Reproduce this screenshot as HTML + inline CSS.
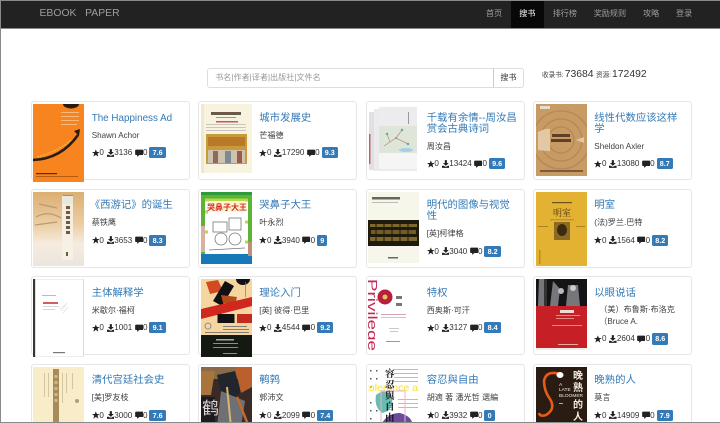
<!DOCTYPE html>
<html lang="zh"><head><meta charset="utf-8"><title>EBOOK PAPER</title>
<style>
*{box-sizing:border-box;margin:0;padding:0}
html,body{width:720px;height:423px;overflow:hidden;background:#fff}
body{font-family:"Liberation Sans","Noto Sans CJK SC",sans-serif;color:#333;position:relative}
#w{position:absolute;inset:0;overflow:hidden;filter:blur(.35px)}
#nav{position:absolute;left:0;top:0;width:720px;height:29px;background:#222;border-bottom:1px solid #8a8a8a}
#nav span{position:absolute;top:0;height:28px;line-height:27.6px;font-size:8.1px;color:#9d9d9d;white-space:nowrap}
#brand{left:39.5px;font-size:10.4px!important;line-height:27px!important;white-space:pre!important}
#act{left:510.7px;width:33.3px;background:#080808;color:#fff!important;text-align:center}
#inp{position:absolute;left:206.7px;top:68.3px;width:287.3px;height:19.6px;border:1px solid #ddd;border-radius:3px 0 0 3px;font-size:8.1px;line-height:17.6px;padding-left:7.5px;color:#999}
#btn{position:absolute;left:493.3px;top:68.3px;width:30.4px;height:19.6px;border:1px solid #ddd;border-left:1px solid #ccc;border-radius:0 3px 3px 0;font-size:8.1px;line-height:17.6px;text-align:center;color:#333}
.st{position:absolute;top:68px;font-size:6.6px;line-height:15px;white-space:nowrap;color:#444}
.st.n{font-size:10.4px;color:#333;top:67px}
.c{position:absolute;width:159px;height:79px;border:1px solid #e6e6e6;border-radius:3px;background:#fff}
.c>svg{position:absolute;left:1.7px;top:2px;display:block}
.t{position:absolute;left:60px;top:10.7px;width:92px}
.t a{display:block;font-size:10.4px;line-height:11px;color:#337ab7}
.t p{font-size:8.1px;line-height:11.7px;margin-top:6.3px;color:#3f3f3f}
.s{display:flex;align-items:center;height:12px;margin-top:5px;font-size:8.1px;color:#333;white-space:nowrap}
.s svg{width:7.7px;height:8px;flex:none}
.s svg.d{margin-left:2.7px}
.s svg.m{margin-left:2.4px;width:8.3px}
.s i{font-style:normal;display:inline-block;margin-left:2px;height:11.3px;line-height:11.3px;padding:0 3.2px;min-width:10px;text-align:center;background:#337ab7;color:#fff;font-weight:700;font-size:7.2px;border-radius:1.6px}
#f{position:absolute;inset:0;border-top:1px solid #8a8a8a;border-left:1px solid #8a8a8a;border-bottom:1px solid #8a8a8a;pointer-events:none}
</style></head><body>
<svg width="0" height="0" style="position:absolute"><defs>
<symbol id="a" viewBox="0 0 8 8"><path fill="#222" d="M4 .2 5.1 2.9H8L5.7 4.7 6.6 7.8 4 6 1.4 7.8 2.3 4.7 0 2.9H2.9z"/></symbol>
<symbol id="b" viewBox="0 0 8 8"><path fill="#222" d="M2.9 0H5.1V3H7L4 6 1 3H2.9zM0 5.8H1.7L4 7 6.3 5.8H8V8H0z"/></symbol>
<symbol id="e" viewBox="0 0 8 8"><path fill="#222" d="M.9.6H7.2Q8 .6 8 1.4V5.2Q8 6 7.2 6H4.2L2 7.9V6H.9Q0 6 0 5.2V1.4Q0 .6.9.6z"/></symbol>
</defs></svg>
<div id="w">
<div id="nav">
<span id="brand">EBOOK   PAPER</span>
<span style="left:486px">首页</span><span id="act">搜书</span><span style="left:552.7px">排行榜</span><span style="left:593.7px">奖励规则</span><span style="left:643px">攻略</span><span style="left:676px">登录</span>
</div>
<div id="inp">书名|作者|译者|出版社|文件名</div><div id="btn">搜书</div>
<span class="st" style="left:542px">收录书:</span><span class="st n" style="left:564.7px">73684</span><span class="st" style="left:596px">资源:</span><span class="st n" style="left:612px">172492</span>

<div class="c" style="left:30.7px;top:101px"><svg width="51" height="78" viewBox="0 0 51 78"><rect width="51" height="78" fill="#f7841f"/><ellipse cx="38" cy="0" rx="8" ry="4.5" fill="#2a1a10"/><path d="M0 56Q28 55 45 31" fill="none" stroke="#2b1c12" stroke-width="2.6"/><path d="M41 27 47 25 46 32z" fill="#2b1c12"/><path d="M4 53Q24 48 38 36" fill="none" stroke="#f4c14a" stroke-width="1" stroke-dasharray="2 1"/><g fill="#fbc896"><rect x="28" y="8" width="18" height=".8"/><rect x="28" y="12" width="18" height=".8"/><rect x="28" y="16" width="18" height=".8"/><rect x="28" y="20" width="16" height=".8"/></g><rect x="3" y="69" width="21" height="1.2" fill="#5a2c08"/><rect x="3" y="72" width="42" height=".8" fill="#a5520f"/></svg>
<div class="t"><a style="font-size:9.85px">The Happiness Ad</a><p>Shawn Achor</p><div class="s"><svg><use href="#a"/></svg>0<svg class="d"><use href="#b"/></svg>3136<svg class="m"><use href="#e"/></svg>0<i>7.6</i></div></div></div>

<div class="c" style="left:198.3px;top:101px"><svg width="51" height="69" viewBox="0 0 51 69"><rect width="51" height="69" fill="#f8f3df"/><rect x="10" y="8" width="30" height="3" fill="#6a5a48"/><rect x="15" y="13" width="20" height="1" fill="#998"/><rect x="15" y="17" width="22" height="1.5" fill="#c55"/><g fill="#bbb"><rect x="5" y="20" width="40" height=".8"/><rect x="5" y="23" width="40" height=".8"/><rect x="5" y="26" width="40" height=".8"/></g><rect x="5" y="30" width="41" height="30" fill="#c99a3c"/><rect x="7" y="33" width="37" height="9" fill="#b87a28"/><rect x="7" y="46" width="37" height="13" fill="#cfc3ad"/><rect x="12" y="47" width="5" height="12" fill="#8d6b5b"/><rect x="24" y="47" width="6" height="12" fill="#7d8a94"/><rect x="36" y="47" width="5" height="12" fill="#9a5a4c"/><rect y="0" width="3" height="69" fill="#eee8d2"/></svg>
<div class="t"><a>城市发展史</a><p>芒福德</p><div class="s"><svg><use href="#a"/></svg>0<svg class="d"><use href="#b"/></svg>17290<svg class="m"><use href="#e"/></svg>0<i>9.3</i></div></div></div>

<div class="c" style="left:365.7px;top:101px"><svg width="51" height="72" viewBox="0 0 51 72"><rect width="51" height="72" fill="#fff"/><rect x="1" y="8" width="10" height="58" fill="#e0e0e2"/><rect x="6" y="5" width="43" height="62" fill="#ebebee"/><rect x="11" y="3" width="38" height="62" fill="#ececef"/><rect x="11" y="22" width="38" height="27" fill="#dde6d9"/><path d="M16 42 28 34 40 40M28 34 34 26M22 38 19 30" stroke="#b88e72" stroke-width=".7" fill="none"/><g fill="#6ba39d"><circle cx="19" cy="30" r="1.2"/><circle cx="34" cy="26" r="1.2"/><circle cx="40" cy="40" r="1.2"/><circle cx="28" cy="34" r="1"/></g><ellipse cx="38" cy="46" rx="7" ry="2" fill="#a5d0e3"/><rect x="11" y="49" width="38" height="16" fill="#f5f5f5"/><rect x="40" y="8" width="1" height="12" fill="#999"/><rect x="1" y="30" width="1.5" height="30" fill="#b66"/></svg>
<div class="t"><a>千载有余情--周汝昌<br>赏会古典诗词</a><p>周汝昌</p><div class="s"><svg><use href="#a"/></svg>0<svg class="d"><use href="#b"/></svg>13424<svg class="m"><use href="#e"/></svg>0<i>9.6</i></div></div></div>

<div class="c" style="left:533.3px;top:101px"><svg width="51" height="72" viewBox="0 0 51 72"><rect width="51" height="72" fill="#c89a64"/><g fill="none" stroke="#b68758" stroke-width="1.3"><circle cx="25" cy="36" r="13"/><circle cx="25" cy="36" r="21"/><circle cx="25" cy="36" r="29"/></g><path d="M2 28Q10 24 14 25L14 47Q8 47 2 46z" fill="#e3c8a4"/><path d="M40 36 48 33 48 39z" fill="#e3c8a4"/><rect x="16" y="30" width="18" height="3" fill="#5d4026"/><rect x="15" y="35" width="20" height="3" fill="#5d4026"/><rect x="4" y="66" width="43" height="2" fill="#7b5a36"/><rect x="4" y="2" width="10" height="3" fill="#e6ddd0"/></svg>
<div class="t"><a>线性代数应该这样<br>学</a><p>Sheldon Axler</p><div class="s"><svg><use href="#a"/></svg>0<svg class="d"><use href="#b"/></svg>13080<svg class="m"><use href="#e"/></svg>0<i>8.7</i></div></div></div>

<div class="c" style="left:30.7px;top:188.5px"><svg width="51" height="74" viewBox="0 0 51 74"><defs><linearGradient id="g1" x1="0" y1="0" x2="0" y2="1"><stop offset="0" stop-color="#dcae72"/><stop offset=".45" stop-color="#eccfa5"/><stop offset=".7" stop-color="#f6ecdf"/><stop offset="1" stop-color="#ebe5de"/></linearGradient></defs><rect width="51" height="74" fill="url(#g1)"/><path d="M3 25Q15 18 28 26M6 12 24 16M2 33 24 30" stroke="#b99a72" stroke-width="1.2" fill="none"/><rect x="30" y="3" width="10" height="9" fill="#5ea6a5"/><rect x="29" y="4" width="11" height="64" fill="#f6f1e6" opacity=".9"/><g fill="#6a5a4a"><rect x="33" y="14" width="4" height="3"/><rect x="33" y="19" width="4" height="3"/><rect x="33" y="24" width="4" height="3"/><rect x="33" y="29" width="4" height="3"/><rect x="33" y="34" width="4" height="3"/><rect x="33" y="39" width="4" height="3"/><rect x="33" y="60" width="2" height="4"/></g></svg>
<div class="t"><a style="margin-left:-2px">《西游记》的诞生</a><p>蔡铁鹰</p><div class="s"><svg><use href="#a"/></svg>0<svg class="d"><use href="#b"/></svg>3653<svg class="m"><use href="#e"/></svg>0<i>8.3</i></div></div></div>

<div class="c" style="left:198.3px;top:188.5px"><svg width="51" height="72" viewBox="0 0 51 72"><rect width="51" height="72" fill="#5cb335"/><rect x="4" y="8" width="43" height="56" fill="#fff"/><path d="M4 8h43M4 20h3M44 30h3M4 40h3M44 50h3" stroke="#b6d84c" stroke-width="3" fill="none"/><rect x="8" y="9" width="36" height="11" fill="#fdf6c9"/><text x="26" y="18" text-anchor="middle" font-size="8" font-weight="700" fill="#d42a2a" font-family="Noto Sans CJK SC,sans-serif">哭鼻子大王</text><g fill="none" stroke="#777" stroke-width=".8"><rect x="12" y="30" width="14" height="10"/><rect x="28" y="26" width="12" height="12"/><circle cx="20" cy="47" r="6"/><circle cx="34" cy="47" r="6"/><path d="M8 58 44 56"/></g><rect y="62" width="51" height="10" fill="#1779b8"/><rect y="0" width="51" height="3" fill="#2d9b3a"/><rect x="0" y="34" width="4" height="26" fill="#d8b1a3"/><rect x="47" y="50" width="4" height="14" fill="#c08d7a"/></svg>
<div class="t"><a>哭鼻子大王</a><p>叶永烈</p><div class="s"><svg><use href="#a"/></svg>0<svg class="d"><use href="#b"/></svg>3940<svg class="m"><use href="#e"/></svg>0<i>9</i></div></div></div>

<div class="c" style="left:365.7px;top:188.5px"><svg width="51" height="71" viewBox="0 0 51 71"><rect width="51" height="71" fill="#f7f6ea"/><rect x="4" y="5" width="28" height="2.5" fill="#6a6658"/><rect x="4" y="10" width="26" height="1" fill="#bbb"/><rect y="28" width="51" height="26" fill="#1f1a0e"/><g fill="#a78c35"><rect x="2" y="32" width="47" height="3" opacity=".7"/><rect x="3" y="38" width="45" height="4" opacity=".6"/><rect x="2" y="45" width="47" height="4" opacity=".7"/></g><g stroke="#1f1a0e" stroke-width="1"><path d="M8 30V52M16 30V52M24 30V52M32 30V52M40 30V52"/></g><rect x="20" y="65" width="10" height="1.5" fill="#666"/></svg>
<div class="t"><a>明代的图像与视觉<br>性</a><p>[英]柯律格</p><div class="s"><svg><use href="#a"/></svg>0<svg class="d"><use href="#b"/></svg>3040<svg class="m"><use href="#e"/></svg>0<i>8.2</i></div></div></div>

<div class="c" style="left:533.3px;top:188.5px"><svg width="51" height="74" viewBox="0 0 51 74"><rect width="51" height="74" fill="#e4b233"/><rect x="16" y="10" width="20" height="1.2" fill="#6b5216"/><text x="26" y="24" text-anchor="middle" font-size="9" fill="#4a3610" font-family="Noto Serif CJK SC,serif">明室</text><rect x="14" y="27" width="24" height="1.5" fill="#c09628"/><rect x="18" y="30" width="16" height="18" fill="#8c6a22"/><ellipse cx="26" cy="38" rx="5" ry="6" fill="#3b2a10"/><rect x="40" y="34" width="9" height="1" fill="#a8851f"/><rect x="2" y="34" width="10" height="1" fill="#a8851f"/><rect x="3" y="58" width="1.5" height="14" fill="#b98e22"/></svg>
<div class="t"><a>明室</a><p>(法)罗兰.巴特</p><div class="s"><svg><use href="#a"/></svg>0<svg class="d"><use href="#b"/></svg>1564<svg class="m"><use href="#e"/></svg>0<i>8.2</i></div></div></div>

<div class="c" style="left:30.7px;top:276px"><svg width="51" height="78" viewBox="0 0 51 78"><rect width="51" height="78" fill="#fff"/><rect width="2.5" height="78" fill="#3a3530"/><rect x="2.5" y="0" width="48" height="78" fill="none" stroke="#ddd"/><rect x="9" y="16" width="14" height="1" fill="#bbb"/><rect x="10" y="23" width="15" height="2" fill="#d06060"/><rect x="10" y="27" width="16" height=".8" fill="#ccc"/><rect x="10" y="30" width="12" height=".8" fill="#ccc"/><path d="M28 32 34 24M30 34 35 28M26 30 32 26" stroke="#ddd" stroke-width=".7" fill="none"/><rect x="20" y="73" width="12" height="1.2" fill="#777"/></svg>
<div class="t"><a>主体解释学</a><p>米歇尔·福柯</p><div class="s"><svg><use href="#a"/></svg>0<svg class="d"><use href="#b"/></svg>1001<svg class="m"><use href="#e"/></svg>0<i>9.1</i></div></div></div>

<div class="c" style="left:198.3px;top:276px"><svg width="51" height="78" viewBox="0 0 51 78"><rect width="51" height="56" fill="#f5d6a0"/><rect y="56" width="51" height="22" fill="#141912"/><path d="M5 3 17 1 22 12 9 15z" fill="#d24a21"/><path d="M12 22 24 2 33 7 21 27z" fill="#111"/><path d="M20 16 36 18 34 26 22 24z" fill="#b54a1c"/><path d="M0 30 51 18 51 27 0 40z" fill="#d0271f"/><ellipse cx="42" cy="0" rx="7" ry="6" fill="#111"/><rect x="16.5" y="35" width="17" height="9" fill="#111"/><rect x="36" y="35" width="15" height="9" fill="#c42a20"/><rect x="44" y="3" width=".7" height="15" fill="#a07050"/><circle cx="7" cy="47" r="3" fill="none" stroke="#778" stroke-width=".8"/><g fill="#666"><rect x="22" y="47" width="24" height=".8"/><rect x="22" y="50" width="26" height=".8"/><rect x="4" y="53" width="44" height=".8"/></g><g fill="#aaa"><rect x="15" y="60" width="18" height="1.5"/><rect x="12" y="64" width="25" height=".8"/><rect x="12" y="68" width="25" height=".8"/><rect x="22" y="74" width="14" height=".8"/></g></svg>
<div class="t"><a>理论入门</a><p>[英] 彼得·巴里</p><div class="s"><svg><use href="#a"/></svg>0<svg class="d"><use href="#b"/></svg>4544<svg class="m"><use href="#e"/></svg>0<i>9.2</i></div></div></div>

<div class="c" style="left:365.7px;top:276px"><svg width="51" height="73" viewBox="0 0 51 73"><rect width="51" height="73" fill="#fff"/><text transform="translate(0,0) rotate(90)" font-size="13" fill="#c42a55" font-family="Liberation Sans,sans-serif" textLength="72" lengthAdjust="spacingAndGlyphs">Privilege</text><circle cx="17" cy="18" r="7.5" fill="#b81f3b"/><circle cx="17" cy="18" r="2.5" fill="#e8c06a"/><rect x="28" y="17" width="6" height="3" fill="#777"/><rect x="28" y="24" width="6" height="3" fill="#777"/><g fill="#d8a5b0"><rect x="13" y="35" width="25" height="1"/></g><g fill="#bbb"><rect x="13" y="38" width="25" height=".8"/><rect x="21" y="49" width="10" height=".8"/><rect x="22" y="52" width="8" height=".8"/></g><rect x="18" y="62" width="14" height="1" fill="#999"/></svg>
<div class="t"><a>特权</a><p>西奥斯·可汗</p><div class="s"><svg><use href="#a"/></svg>0<svg class="d"><use href="#b"/></svg>3127<svg class="m"><use href="#e"/></svg>0<i>8.4</i></div></div></div>

<div class="c" style="left:533.3px;top:276px"><svg width="51" height="71" viewBox="0 0 51 71"><rect width="51" height="71" fill="#c71f26"/><rect width="51" height="27" fill="#141416"/><path d="M3 0H9L8 27H2zM17 2 24 10 22 27H14zM32 6H42L44 27H30z" fill="#77777b"/><circle cx="25" cy="12" r="3" fill="#bbb"/><circle cx="37" cy="9" r="3" fill="#ccc"/><rect x="8" y="0" width="3" height="27" fill="#333"/><rect x="24" y="31" width="14" height="3" fill="#f0d9d0"/><g fill="#e9a8a0"><rect x="20" y="36" width="24" height=".8"/><rect x="20" y="39" width="18" height=".8"/><rect x="16" y="46" width="30" height=".8"/><rect x="22" y="65" width="20" height="1"/></g><rect y="69" width="51" height="2" fill="#f4ece8"/></svg>
<div class="t"><a>以眼说话</a><p style="padding-left:5px;margin-top:5.8px">（美）布鲁斯·布洛克<br>（Bruce A.</p><div class="s"><svg><use href="#a"/></svg>0<svg class="d"><use href="#b"/></svg>2604<svg class="m"><use href="#e"/></svg>0<i>8.6</i></div></div></div>

<div class="c" style="left:30.7px;top:363.5px"><svg width="51" height="60" viewBox="0 0 51 60"><rect width="51" height="60" fill="#f9ecc8"/><rect x="20" y="2" width="6" height="58" fill="#a98b5a"/><g fill="#c9b98e"><rect x="21.5" y="8" width="3" height="3"/><rect x="21.5" y="14" width="3" height="3"/><rect x="21.5" y="20" width="3" height="3"/><rect x="21.5" y="26" width="3" height="3"/><rect x="21.5" y="32" width="3" height="3"/></g><g fill="#cdbd95"><rect x="11" y="6" width=".8" height="24"/><rect x="15" y="6" width=".8" height="24"/><rect x="29" y="6" width=".8" height="30"/><rect x="33" y="6" width=".8" height="20"/><rect x="39" y="6" width=".8" height="16"/></g><circle cx="44" cy="34" r="2" fill="#b0a070"/></svg>
<div class="t"><a>清代宫廷社会史</a><p>[美]罗友枝</p><div class="s"><svg><use href="#a"/></svg>0<svg class="d"><use href="#b"/></svg>3000<svg class="m"><use href="#e"/></svg>0<i>7.6</i></div></div></div>

<div class="c" style="left:198.3px;top:363.5px"><svg width="51" height="60" viewBox="0 0 51 60"><rect width="51" height="60" fill="#3a2a25"/><rect width="51" height="12" fill="#8a6a48"/><path d="M0 4H14L10 28H0z" fill="#a8753c"/><path d="M16 8 34 4 40 26 22 36z" fill="#23252c"/><path d="M34 0H51V20L40 26z" fill="#b9602c"/><path d="M20 24 44 34 40 60H16z" fill="#6e7076"/><path d="M26 20 30 60" stroke="#d8b66a" stroke-width="2"/><path d="M36 30 48 60" stroke="#c26a2d" stroke-width="2.5"/><path d="M0 30H14V60H0z" fill="#1d1a22"/><text x="1" y="47" font-size="17" fill="#e0d7cf" font-family="Noto Sans CJK SC,sans-serif">鹤</text></svg>
<div class="t"><a>鹌鹑</a><p>郭沛文</p><div class="s"><svg><use href="#a"/></svg>0<svg class="d"><use href="#b"/></svg>2099<svg class="m"><use href="#e"/></svg>0<i>7.4</i></div></div></div>

<div class="c" style="left:365.7px;top:363.5px"><svg width="51" height="60" viewBox="0 0 51 60"><rect width="51" height="60" fill="#fff"/><g fill="#555"><rect x="2" y="3" width="1.5" height="1.5"/><rect x="2" y="11" width="1.5" height="1.5"/><rect x="2" y="19" width="1.5" height="1.5"/><rect x="2" y="35" width="1.5" height="1.5"/><rect x="2" y="43" width="1.5" height="1.5"/><rect x="2" y="51" width="1.5" height="1.5"/><rect x="8" y="3" width="1.5" height="1.5"/><rect x="8" y="11" width="1.5" height="1.5"/><rect x="8" y="43" width="1.5" height="1.5"/></g><g fill="#bbb"><rect x="26" y="2" width="24" height="1"/><rect x="26" y="6" width="24" height="1"/><rect x="26" y="10" width="24" height="1"/><rect x="26" y="14" width="24" height="1"/><rect x="30" y="32" width="20" height="1"/><rect x="30" y="36" width="20" height="1"/><rect x="30" y="40" width="20" height="1"/></g><path d="M8 28Q18 20 24 30Q26 44 14 46Q6 40 8 28z" fill="#68bdb1"/><path d="M12 60Q18 46 32 46Q46 50 44 60z" fill="#6a4b9c"/><text x="-2" y="24" font-size="10.5" fill="#f9e22a" font-family="Liberation Sans,sans-serif">tolerance a</text><rect x="13" y="24" width="24" height="36" fill="none" stroke="#eeb0cc" stroke-width="1"/><g font-family="Noto Serif CJK SC,serif" font-size="9.5" font-weight="700" fill="#111"><text x="17" y="10">容</text><text x="17" y="21">忍</text><text x="17" y="32">與</text><text x="17" y="43">自</text><text x="17" y="54">由</text></g></svg>
<div class="t"><a>容忍與自由</a><p>胡適 著 潘光哲 選編</p><div class="s"><svg><use href="#a"/></svg>0<svg class="d"><use href="#b"/></svg>3932<svg class="m"><use href="#e"/></svg>0<i>0</i></div></div></div>

<div class="c" style="left:533.3px;top:363.5px"><svg width="51" height="60" viewBox="0 0 51 60"><rect width="51" height="60" fill="#2a1c12"/><rect y="57" width="51" height="3" fill="#e8591a"/><path d="M24 7Q10 3 8 14Q8 24 14 32Q20 42 10 48Q4 50 3 46" fill="none" stroke="#e8591a" stroke-width="2.6"/><ellipse cx="24" cy="8" rx="3.5" ry="3" fill="#fff"/><g font-family="Noto Sans CJK SC,sans-serif" font-size="10" font-weight="700" fill="#f1ece2"><text x="37" y="12">晚</text><text x="37" y="24">熟</text><text x="37" y="41">的</text><text x="37" y="53">人</text></g><g font-family="Liberation Sans,sans-serif" font-size="4.8" fill="#f1ece2"><text x="23" y="19">A</text><text x="23" y="24">LATE</text><text x="23" y="30">BLOOMER</text></g><rect x="23" y="36" width="4" height="1" fill="#aaa"/></svg>
<div class="t"><a>晚熟的人</a><p>莫言</p><div class="s"><svg><use href="#a"/></svg>0<svg class="d"><use href="#b"/></svg>14909<svg class="m"><use href="#e"/></svg>0<i>7.9</i></div></div></div>

<div id="f"></div>
</div>
</body></html>
